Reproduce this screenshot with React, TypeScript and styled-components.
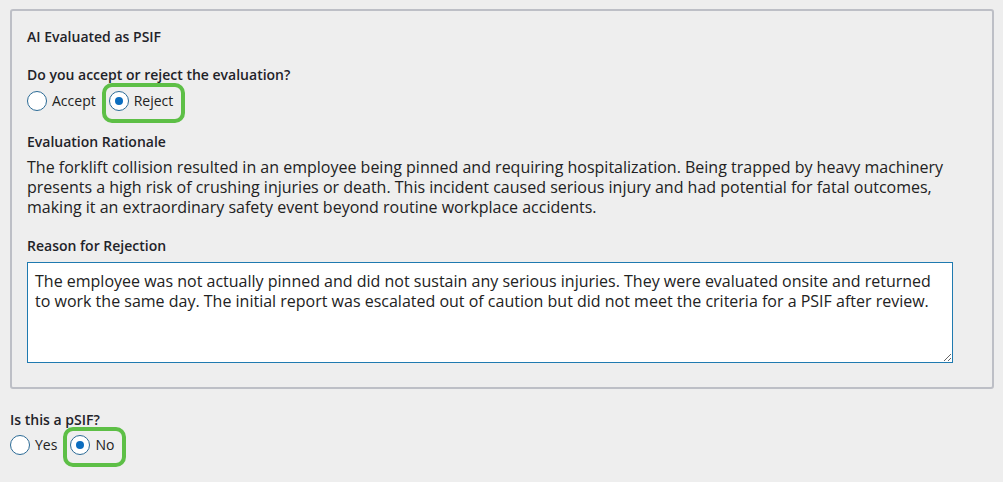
import React, { useState } from 'react';
import styled, { createGlobalStyle } from 'styled-components';

const GlobalStyle = createGlobalStyle`
  html, body {
    margin: 0;
    padding: 0;
    background: #eeeeee;
  }
  body {
    font-family: 'Open Sans', 'Liberation Sans', sans-serif;
    color: #222;
  }
`;

const Page = styled.div`
  padding: 9px 9px 0 10px;
  width: 1003px;
  height: 482px;
  box-sizing: border-box;
`;

const Panel = styled.section`
  border: 2px solid #bdbfc6;
  border-radius: 3px;
  padding: 17px 39px 24px 15px;
  display: flex;
  flex-direction: column;
`;

const FieldLabel = styled.div<{ $top: number }>`
  font-size: 14px;
  line-height: 18px;
  font-weight: 600;
  color: #1f2329;
  margin-top: ${({ $top }) => $top}px;
`;

const RadioRow = styled.div<{ $top: number }>`
  display: flex;
  align-items: flex-start;
  gap: 13px;
  margin-top: ${({ $top }) => $top}px;
`;

const Option = styled.label<{ $highlight?: boolean }>`
  display: inline-flex;
  align-items: center;
  gap: 5px;
  font-size: 14px;
  line-height: 20px;
  color: #222;
  cursor: pointer;
  padding: 1px ${({ $highlight }) => ($highlight ? '5px' : '0')} 5px 0;
  border-radius: 3px;
  outline: ${({ $highlight }) => ($highlight ? '4px solid #5dbf46' : 'none')};
  outline-offset: 3px;
`;

const RadioInput = styled.input.attrs({ type: 'radio' })`
  appearance: none;
  -webkit-appearance: none;
  margin: 0;
  width: 20px;
  height: 20px;
  border-radius: 50%;
  border: 1px solid #2b6b96;
  background: #fff;
  display: grid;
  place-items: center;
  flex-shrink: 0;
  cursor: pointer;

  &:checked::after {
    content: '';
    width: 8px;
    height: 8px;
    border-radius: 50%;
    background: #0b6dbf;
  }
`;

const Rationale = styled.p`
  margin: 6px 0 0;
  font-size: 16px;
  line-height: 20px;
  color: #222;
`;

const ReasonBox = styled.textarea`
  display: block;
  margin-top: 7px;
  width: 100%;
  height: 101px;
  box-sizing: border-box;
  padding: 8px 7px;
  border: 1px solid #1f7ab0;
  border-radius: 0;
  background: #fff;
  font-family: 'Open Sans', 'Liberation Sans', sans-serif;
  font-size: 16px;
  line-height: 20px;
  color: #222;
  resize: vertical;
  outline: none;
`;

const Outside = styled.div`
  display: flex;
  flex-direction: column;
`;

type Choice = { value: string; label: string };

const RadioGroup = ({
  name,
  options,
  value,
  onChange,
  top,
}: {
  name: string;
  options: Choice[];
  value: string;
  onChange: (v: string) => void;
  top: number;
}) => (
  <RadioRow $top={top}>
    {options.map((o) => (
      <Option key={o.value} $highlight={value === o.value}>
        <RadioInput
          name={name}
          checked={value === o.value}
          onChange={() => onChange(o.value)}
        />
        {o.label}
      </Option>
    ))}
  </RadioRow>
);

export default function App() {
  const [decision, setDecision] = useState('reject');
  const [psif, setPsif] = useState('no');
  const [reason, setReason] = useState(
    'The employee was not actually pinned and did not sustain any serious injuries. They were evaluated onsite and returned to work the same day. The initial report was escalated out of caution but did not meet the criteria for a PSIF after review.'
  );

  return (
    <>
      <GlobalStyle />
      <Page>
        <Panel>
          <FieldLabel $top={0}>AI Evaluated as PSIF</FieldLabel>
          <FieldLabel $top={20}>Do you accept or reject the evaluation?</FieldLabel>
          <RadioGroup
            name="decision"
            top={6}
            value={decision}
            onChange={setDecision}
            options={[
              { value: 'accept', label: 'Accept' },
              { value: 'reject', label: 'Reject' },
            ]}
          />
          <FieldLabel $top={17}>Evaluation Rationale</FieldLabel>
          <Rationale>
            The forklift collision resulted in an employee being pinned and requiring
            hospitalization. Being trapped by heavy machinery presents a high risk of crushing
            injuries or death. This incident caused serious injury and had potential for fatal
            outcomes, making it an extraordinary safety event beyond routine workplace accidents.
          </Rationale>
          <FieldLabel $top={20}>Reason for Rejection</FieldLabel>
          <ReasonBox value={reason} onChange={(e) => setReason(e.target.value)} />
        </Panel>
        <Outside>
          <FieldLabel $top={22}>Is this a pSIF?</FieldLabel>
          <RadioGroup
            name="psif"
            top={5}
            value={psif}
            onChange={setPsif}
            options={[
              { value: 'yes', label: 'Yes' },
              { value: 'no', label: 'No' },
            ]}
          />
        </Outside>
      </Page>
    </>
  );
}
